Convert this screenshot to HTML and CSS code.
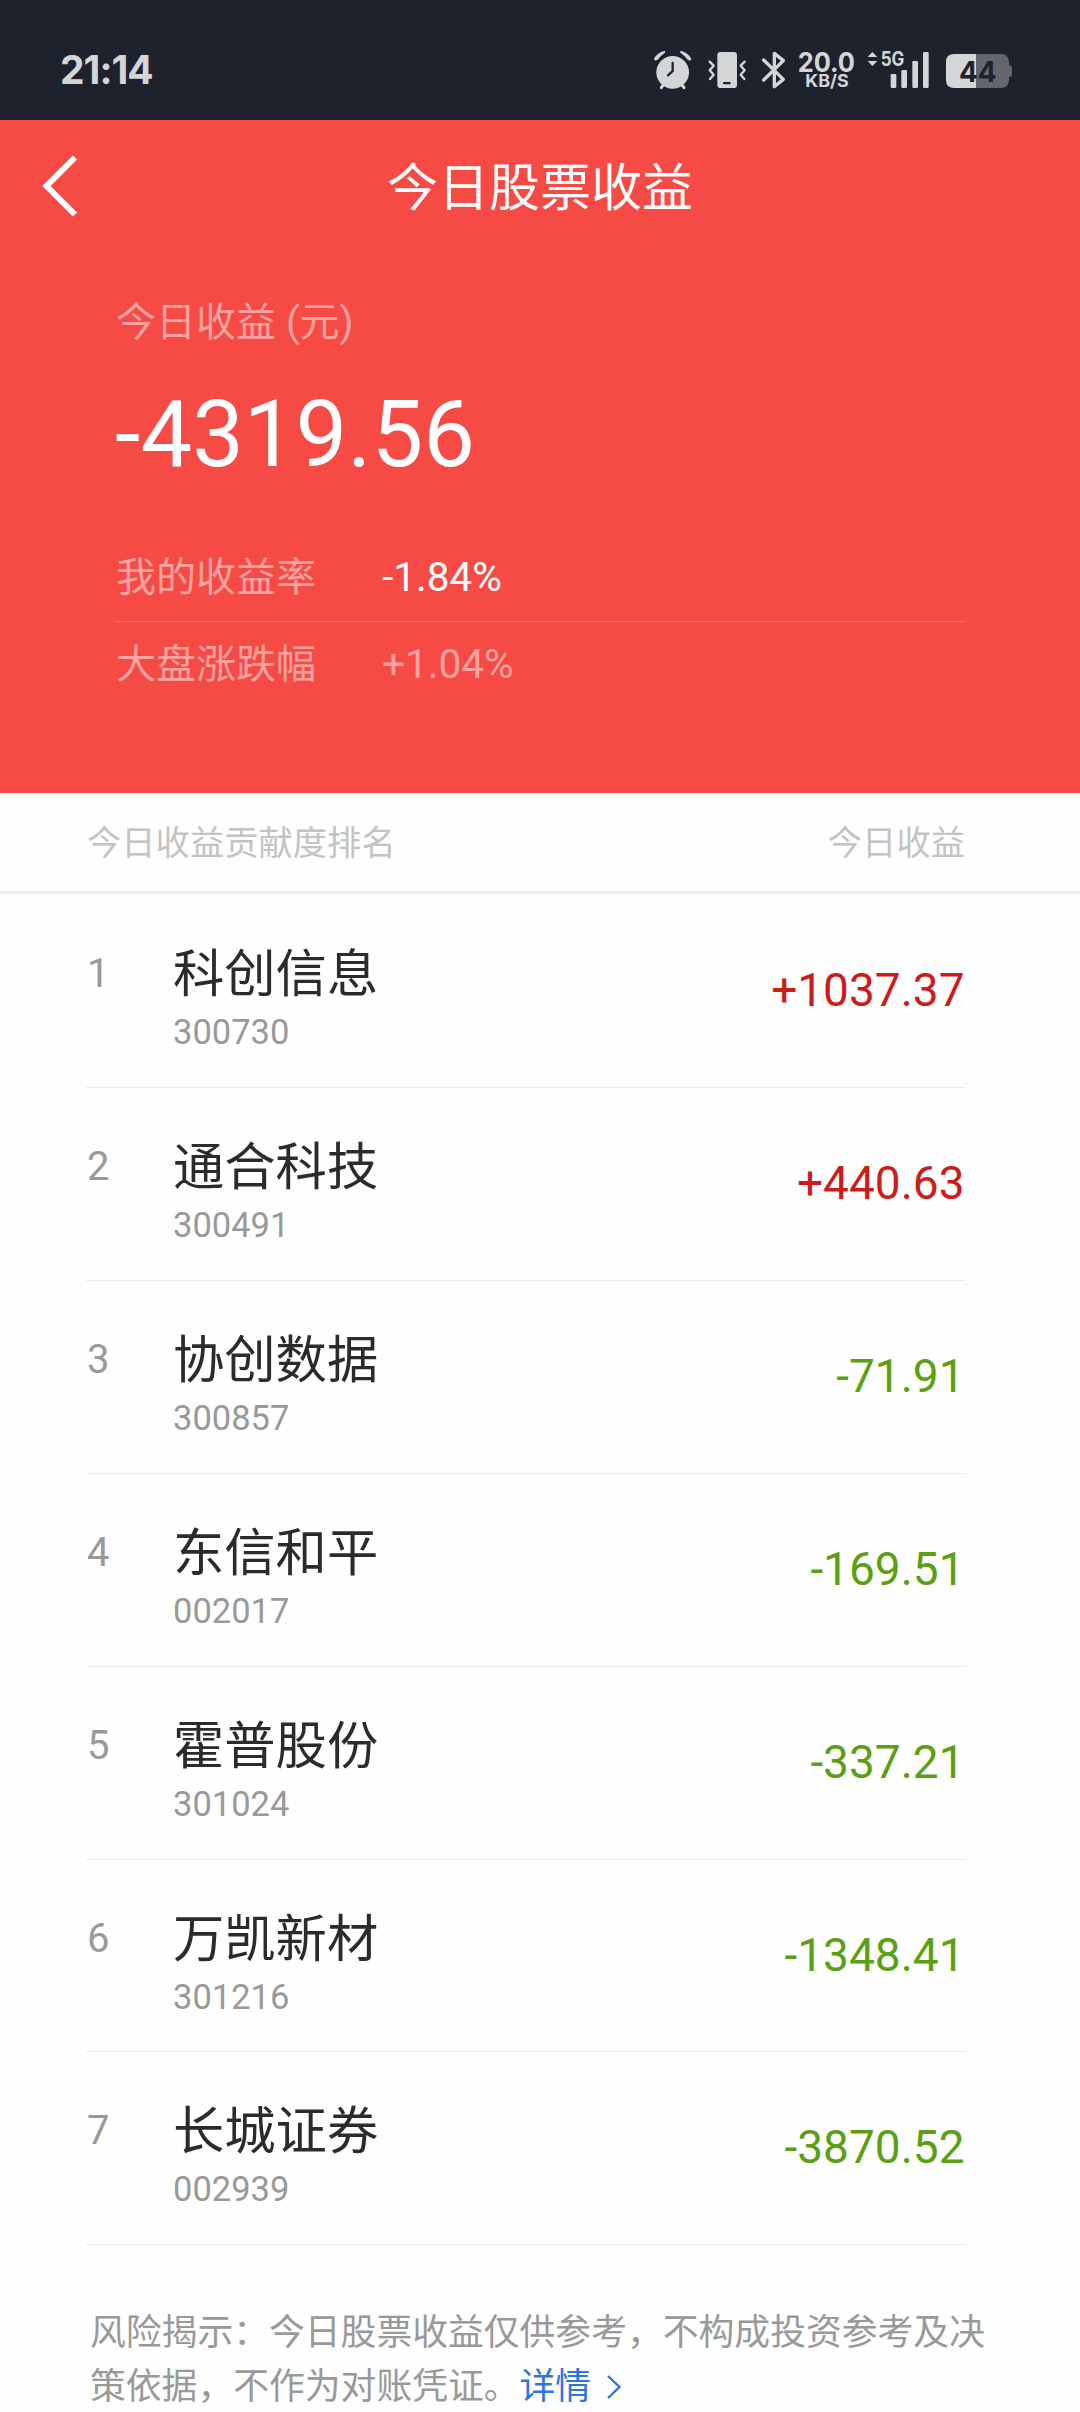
FILE: index.html
```html
<!DOCTYPE html>
<html lang="zh-CN">
  <head>
    <meta charset="utf-8" />
    <meta name="viewport" content="width=device-width, initial-scale=1" />
    <link rel="stylesheet" href="styles.css">
    <title>今日股票收益</title>
  </head>
  <body>
    <div class="status-bar">
      <span class="clock">21:14</span>
      <svg class="status-icons" viewBox="0 0 1200 240" fill="currentColor">
        <!-- alarm -->
        <circle cx="98" cy="127" r="49" />
        <path d="M45 87A44 44 0 0 1 73 66Q58 77 51 87Q47 90 45 87ZM151 87A44 44 0 0 0 123 66Q138 77 145 87Q149 90 151 87Z" stroke="currentColor" stroke-width="6" stroke-linejoin="round" />
        <path d="M72 162L64 173M124 162L132 173" stroke="currentColor" stroke-width="9" stroke-linecap="round" />
        <path class="cutout-line" d="M98 99V123L84 136" />
        <!-- vibrate -->
        <rect x="232" y="66" width="59" height="108" rx="10" />
        <rect class="cutout" x="249" y="156" width="23" height="7" rx="3" />
        <path class="line" d="M209 95L221 107L209 121L221 134L210 147M314 95L302 107L314 121L302 134L313 147" stroke-width="7" />
        <!-- bluetooth -->
        <path class="line" d="M371 90L430 148L403 170V70L430 92L371 150" stroke-width="10" />
        <!-- network speed -->
        <text x="473" y="125" font-size="82" font-weight="700" textLength="172" lengthAdjust="spacingAndGlyphs">20.0</text>
        <text x="496" y="172" font-size="51" font-weight="700" textLength="130" lengthAdjust="spacingAndGlyphs">KB/S</text>
        <!-- signal -->
        <path d="M683 81L697 66L712 81ZM683 93L697 108L712 93Z" />
        <text x="722" y="109" font-size="59" font-weight="700" textLength="71" lengthAdjust="spacingAndGlyphs">5G</text>
        <rect x="752" y="132" width="17" height="42" rx="4" />
        <rect x="784" y="120" width="17" height="54" rx="4" />
        <rect x="817" y="93" width="17" height="81" rx="4" />
        <rect x="849" y="66" width="17" height="108" rx="4" />
        <!-- battery -->
        <path class="battery-empty" d="M1008 72H1083Q1105 72 1107 96V104Q1116 106 1116 114V132Q1116 140 1107 142V150Q1105 174 1083 174H1008Z" />
        <path d="M1008 72H942Q918 72 918 96V150Q918 174 942 174H1008Z" />
        <text class="cutout" x="957" y="156" font-size="87" font-weight="700" textLength="113" lengthAdjust="spacingAndGlyphs">44</text>
      </svg>
    </div>

    <header class="nav">
      <svg class="back" viewBox="0 0 36 64">
        <path d="M33 3.5L4.5 32L33 60.5" />
      </svg>
      <h1>今日股票收益</h1>
    </header>

    <section class="summary">
      <p class="summary-label">今日收益 (元)</p>
      <p class="summary-total">-4319.56</p>
      <dl>
        <div class="rate">
          <dt>我的收益率</dt>
          <dd class="mine">-1.84%</dd>
        </div>
        <div class="rate">
          <dt>大盘涨跌幅</dt>
          <dd>+1.04%</dd>
        </div>
      </dl>
    </section>

    <main>
      <div class="list-head">
        <span>今日收益贡献度排名</span>
        <span>今日收益</span>
      </div>
      <ol class="stocks">
        <li>
          <span class="rank">1</span>
          <div class="stock"><b>科创信息</b><small>300730</small></div>
          <span class="amount up">+1037.37</span>
        </li>
        <li>
          <span class="rank">2</span>
          <div class="stock"><b>通合科技</b><small>300491</small></div>
          <span class="amount up">+440.63</span>
        </li>
        <li>
          <span class="rank">3</span>
          <div class="stock"><b>协创数据</b><small>300857</small></div>
          <span class="amount down">-71.91</span>
        </li>
        <li>
          <span class="rank">4</span>
          <div class="stock"><b>东信和平</b><small>002017</small></div>
          <span class="amount down">-169.51</span>
        </li>
        <li>
          <span class="rank">5</span>
          <div class="stock"><b>霍普股份</b><small>301024</small></div>
          <span class="amount down">-337.21</span>
        </li>
        <li>
          <span class="rank">6</span>
          <div class="stock"><b>万凯新材</b><small>301216</small></div>
          <span class="amount down">-1348.41</span>
        </li>
        <li>
          <span class="rank">7</span>
          <div class="stock"><b>长城证券</b><small>002939</small></div>
          <span class="amount down">-3870.52</span>
        </li>
      </ol>
      <p class="notice">
        风险揭示：今日股票收益仅供参考，不构成投资参考及决<br>策依据，不作为对账凭证。<a href="#">详情<svg class="more" viewBox="0 0 14 24"><path d="M1 1L12.5 12L1 23" /></svg></a>
      </p>
    </main>
  </body>
</html>
```
FILE: styles.css
```css
:root {
  --status: #1e222d;
  --red: #f64a45;
  --red-soft: #ffa3a0;
  --line: #ececec;
  --grey: #999;
}

* {
  box-sizing: border-box;
  margin: 0;
  padding: 0;
}

body {
  width: 1080px;
  height: 2412px;
  overflow: hidden;
  background: #fefefe;
  color: #2b2b2b;
  font-family: Roboto, "Noto Sans CJK SC", sans-serif;
}

.status-bar {
  display: flex;
  align-items: center;
  justify-content: space-between;
  height: 120px;
  padding: 20px 40px 0 60px;
  background: var(--status);
  color: #d4d5d7;
  font-family: Inter, sans-serif;
}

.clock {
  font-size: 39px;
  font-weight: 700;
  letter-spacing: -1px;
  line-height: 80px;
}

.status-icons {
  width: 400px;
  height: 80px;

  & .line {
    fill: none;
    stroke: currentColor;
    stroke-linecap: round;
    stroke-linejoin: round;
  }

  & .cutout {
    fill: var(--status);
  }

  & .cutout-line {
    fill: none;
    stroke: var(--status);
    stroke-width: 7;
    stroke-linecap: round;
  }

  & .battery-empty {
    fill: #63666d;
  }
}

.nav {
  display: grid;
  grid-template-columns: 120px 1fr 120px;
  align-items: center;
  height: 134px;
  background: var(--red);
  color: #fff;

  & h1 {
    padding-top: 4px;
    font-size: 51px;
    font-weight: 400;
    line-height: 70px;
    text-align: center;
  }
}

.back {
  width: 36px;
  height: 64px;
  margin: 0 0 2px 42px;
  fill: none;
  stroke: #fff;
  stroke-width: 6;
}

/* Totals on the red panel */
.summary {
  height: 539px;
  padding: 39px 115px 0;
  background: var(--red);
  color: var(--red-soft);
  font-size: 40px;
}

.summary-label {
  padding-left: 1px;
  line-height: 60px;
}

.summary-total {
  margin-top: 27px;
  color: #fff;
  font-size: 92px;
  line-height: 110px;
}

.summary dl {
  margin-top: 44px;
}

.rate {
  display: flex;
  height: 87px;
  line-height: 87px;

  & dt {
    width: 267px;
    padding-left: 1px;
  }

  & dd {
    font-size: 40.5px;
  }

  & + & {
    line-height: 85px;
    border-top: 1px solid #f8716d;
  }
}

.mine {
  color: #fff;
}

.list-head {
  display: flex;
  justify-content: space-between;
  height: 101px;
  padding: 1px 115px 0 87px;
  border-bottom: 3px solid var(--line);
  color: #c3c3c3;
  font-size: 34.3px;
  line-height: 98px;
}

.stocks {
  padding: 1.3px 114px 0 86px;
  list-style: none;

  & li {
    display: flex;
    height: 192.85px;
    border-bottom: 1px solid var(--line);
  }
}

.rank {
  width: 87px;
  padding: 55px 0 0 1px;
  color: var(--grey);
  font-size: 40px;
  line-height: 48px;
}

.stock {
  flex: 1;
  padding-top: 45px;

  & b {
    display: block;
    font-size: 51.3px;
    font-weight: 400;
    line-height: 70px;
  }

  & small {
    display: block;
    color: var(--grey);
    font-size: 34.5px;
    line-height: 44px;
  }
}

.amount {
  padding-right: 1.5px;
  font-size: 46px;
  line-height: 190px;
}

.up {
  color: #cb1c1c;
}

.down {
  color: #5aa012;
}

.notice {
  padding: 61px 0 0 90px;
  color: var(--grey);
  font-size: 35.8px;
  line-height: 54px;
  white-space: nowrap;

  & a {
    color: #2b75e0;
    text-decoration: none;
  }
}

.more {
  width: 14px;
  height: 24px;
  margin-left: 16px;
  fill: none;
  stroke: currentColor;
  stroke-width: 2.4;
}
```
